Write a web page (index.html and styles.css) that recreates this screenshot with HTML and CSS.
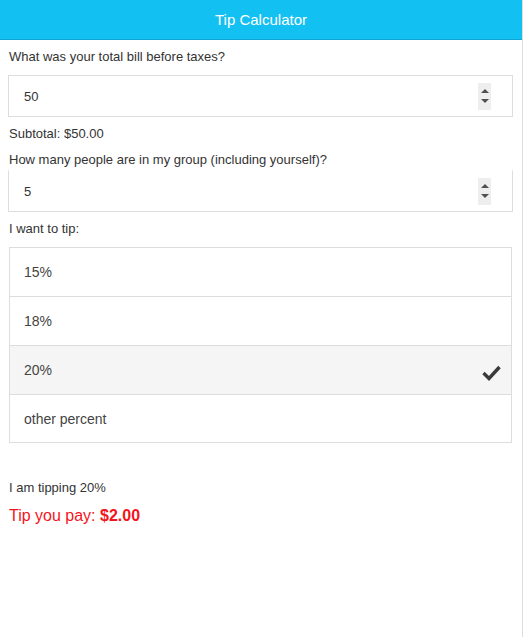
FILE: index.html
```html
<!DOCTYPE html>
<html>
<head>
<meta charset="utf-8">
<link rel="stylesheet" href="styles.css">
</head>
<body>
<div class="app">
  <header class="bar">Tip Calculator</header>
  <main class="content">
    <label class="label">What was your total bill before taxes?</label>
    <div class="field">
      <span class="value">50</span>
      <span class="spin"><i class="up"></i><i class="down"></i></span>
    </div>
    <div class="note">Subtotal: $50.00</div>
    <label class="label label-tight">How many people are in my group (including yourself)?</label>
    <div class="field field-notop">
      <span class="value">5</span>
      <span class="spin"><i class="up"></i><i class="down"></i></span>
    </div>
    <div class="note note-tip">I want to tip:</div>
    <ul class="list">
      <li class="item">15%</li>
      <li class="item">18%</li>
      <li class="item item-on">20%
        <svg class="check" width="19" height="16" viewBox="0 0 19 16"><path d="M1.5 8 L7 13.5 L17.5 2" fill="none" stroke="#3a3a3a" stroke-width="3.4"/></svg>
      </li>
      <li class="item item-last">other percent</li>
    </ul>
    <div class="summary">I am tipping 20%</div>
    <div class="result">Tip you pay: <b>$2.00</b></div>
  </main>
</div>
</body>
</html>
```
FILE: styles.css
```css
html, body {
  margin: 0;
  padding: 0;
  background: #fff;
}
body {
  font-family: "Liberation Sans", Arial, sans-serif;
  color: #333;
}
.app {
  width: 522px;
  min-height: 637px;
  border-right: 1px solid #ddd;
  box-sizing: content-box;
}
.bar {
  height: 39px;
  line-height: 40px;
  background: #12c1f2;
  border-bottom: 1px solid #0ea5d2;
  color: #fff;
  text-align: center;
  font-size: 15px;
}
.content {
  padding: 0 9px 0 8px;
}
.label {
  display: block;
  font-size: 13px;
  line-height: 16px;
  padding: 9px 0 10px 1px;
}
.label-tight {
  padding: 10px 0 2px 1px;
}
.field {
  height: 40px;
  border: 1px solid #ddd;
  display: flex;
  align-items: center;
  justify-content: space-between;
  padding: 0 21px 0 15px;
  font-size: 13px;
  color: #333;
}
.field-notop {
  border-top: 1px solid transparent;
}
.spin {
  width: 13px;
  height: 27px;
  background: #eee;
  display: flex;
  flex-direction: column;
  align-items: center;
  justify-content: center;
  gap: 6px;
}
.up, .down {
  display: block;
  width: 0;
  height: 0;
  border-left: 4px solid transparent;
  border-right: 4px solid transparent;
}
.up { border-bottom: 4px solid #505050; }
.down { border-top: 4px solid #505050; }
.note {
  font-size: 13px;
  line-height: 16px;
  padding: 9px 0 0 1px;
}
.note-tip {
  padding: 9px 0 10px 1px;
}
.list {
  list-style: none;
  margin: 0 1px 0 1px;
  padding: 0;
  border: 1px solid #ddd;
}
.item {
  height: 48px;
  border-top: 1px solid #ddd;
  display: flex;
  align-items: center;
  justify-content: space-between;
  padding: 0 10px 0 14px;
  font-size: 14px;
  color: #444;
}
.item:first-child {
  border-top: none;
}
.item-last {
  height: 47px;
}
.item-on {
  background: #f5f5f5;
}
.check {
  margin-top: 6px;
}
.summary {
  font-size: 13px;
  line-height: 16px;
  padding: 37px 0 0 1px;
}
.result {
  font-size: 16px;
  line-height: 20px;
  color: #f4141b;
  padding: 10px 0 0 1px;
}
.result b {
  font-weight: bold;
}
```
